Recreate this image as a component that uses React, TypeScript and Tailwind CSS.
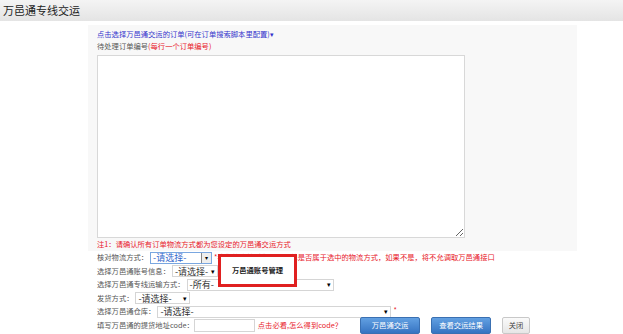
import { ReactNode } from 'react';

const FONT = '"Noto Sans CJK SC", "Liberation Sans", sans-serif';

function FakeSelect({
  text,
  width,
  blue = false
}: {
  text: string;
  width: number;
  blue?: boolean;
}) {
  return (
    <div
      className={`flex items-center justify-between h-[12px] bg-white border ${
        blue ? 'border-[#7aa7e0] text-[#3366cc]' : 'border-[#d5d5d5] text-[#333]'
      }`}
      style={{ width }}
    >
      <span className="pl-[2px] text-[9px] leading-none">{text}</span>
      {blue ? (
        <span className="h-full w-[10px] border-l border-[#888] bg-[#eee] flex items-center justify-center text-[6px] text-black">
          ▾
        </span>
      ) : (
        <span className="pr-[2px] text-[7px] text-black leading-none">▾</span>
      )}
    </div>
  );
}

function Row({ children }: { children: ReactNode }) {
  return <div className="flex items-center h-[13.5px] gap-[2px]">{children}</div>;
}

function Btn({ label, width, gray = false }: { label: string; width: number; gray?: boolean }) {
  return (
    <div
      className={`h-[17px] flex items-center justify-center text-[7.3px] rounded-[2px] border ${
        gray
          ? 'bg-gradient-to-b from-[#fafafa] to-[#e6e6e6] border-[#c8c8c8] text-[#444]'
          : 'bg-gradient-to-b from-[#62a0e2] to-[#3674c2] border-[#3a70b2] text-white'
      }`}
      style={{ width }}
    >
      {label}
    </div>
  );
}

export default function App() {
  return (
    <div className="w-[623px] h-[334px] bg-white overflow-hidden" style={{ fontFamily: FONT }}>
      <div className="h-[21px] bg-gradient-to-b from-[#f4f4f4] to-[#e4e4e4] flex items-center pl-[3px]">
        <span className="text-[11px] text-[#222] leading-none">万邑通专线交运</span>
      </div>
      <div className="ml-[88px] w-[489px] mt-[4px] bg-[#f8f8f8] pl-[9px] pt-[3px] pb-[1px] text-[7.3px]">
        <div className="text-[#3333cc] leading-[12px]">
          点击选择万邑通交运的订单(可在订单搜索脚本里配置)▾
        </div>
        <div className="text-[#555] leading-[12px]">
          待处理订单编号<span className="text-[#e8202a]">(每行一个订单编号)</span>
        </div>
        <textarea
          className="mt-[3px] block w-[368px] h-[183px] bg-white border border-[#d8d8d8] outline-none"
          defaultValue=""
        />
        <div className="h-[12px] flex items-center text-[#e8202a]">
          注1：请确认所有订单物流方式都为您设定的万邑通交运方式
        </div>
      </div>
      <div className="relative ml-[97px] text-[7.3px] text-[#555]">
        <Row>
          <span>核对物流方式：</span>
          <FakeSelect text="-请选择-" width={62} blue />
          <span className="text-[#e8202a]">
            *我们将会核对您所选订单是否属于选中的物流方式，如果不是，将不允调取万邑通接口
          </span>
        </Row>
        <Row>
          <span>选择万邑通账号信息：</span>
          <FakeSelect text="-请选择-" width={46} />
        </Row>
        <Row>
          <span>选择万邑通专线运输方式：</span>
          <FakeSelect text="-所有-" width={147} />
        </Row>
        <Row>
          <span>发货方式：</span>
          <FakeSelect text="-请选择-" width={55} />
        </Row>
        <Row>
          <span>选择万邑通仓库：</span>
          <FakeSelect text="-请选择-" width={234} />
          <span className="text-[#e8202a] self-start">*</span>
        </Row>
        <div className="flex items-center h-[13px]">
          <span>填写万邑通的提货地址code：</span>
          <div className="w-[61px] h-[13px] bg-white border border-[#d5d5d5] shrink-0" />
          <span className="text-[#e8202a] ml-[3px]">点击必看,怎么得到code？</span>
          <div className="ml-[18px] flex items-center gap-[11px]">
            <Btn label="万邑通交运" width={60} />
            <Btn label="查看交运结果" width={60} />
            <Btn label="关闭" width={28} gray />
          </div>
        </div>
        <div className="absolute left-[121px] top-[3px] w-[79px] h-[33px] border-[3px] border-[#e02020] bg-white flex items-center justify-center">
          <span className="font-bold text-[#222]">万邑通账号管理</span>
        </div>
      </div>
    </div>
  );
}
